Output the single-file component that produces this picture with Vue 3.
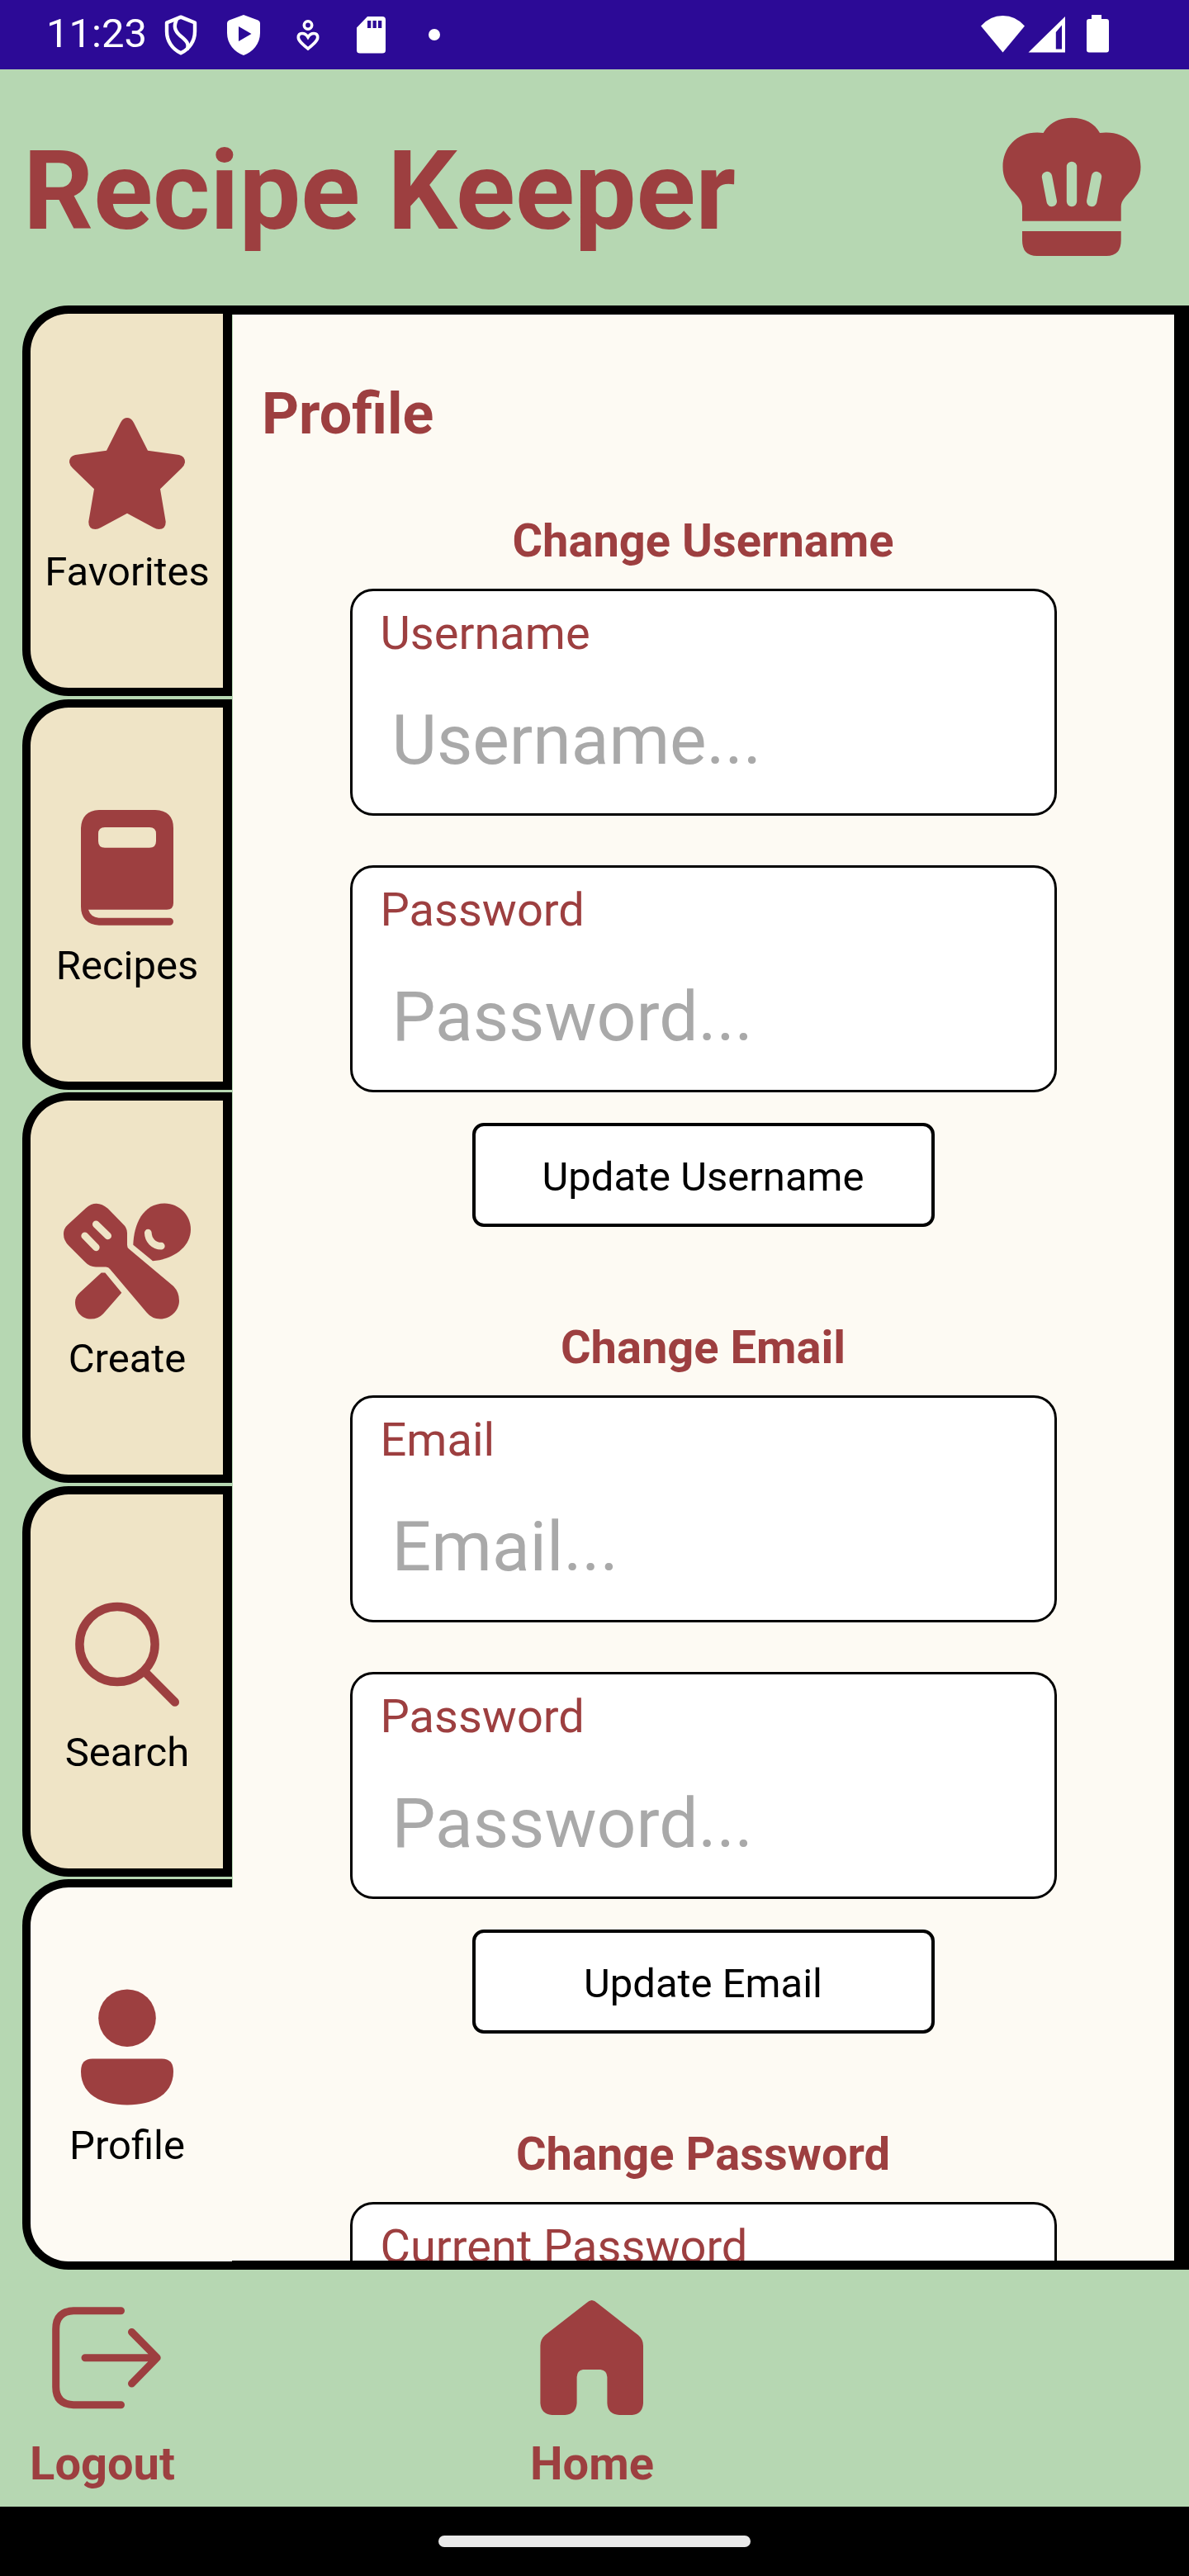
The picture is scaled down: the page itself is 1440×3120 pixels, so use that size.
<script setup>
const tabs = [
  { id: 'favorites', label: 'Favorites' },
  { id: 'recipes', label: 'Recipes' },
  { id: 'create', label: 'Create' },
  { id: 'search', label: 'Search' },
  { id: 'profile', label: 'Profile', active: true },
]

const sections = [
  { title: 'Change Username', fields: [{ label: 'Username', hint: 'Username...' }, { label: 'Password', hint: 'Password...' }], action: 'Update Username' },
  { title: 'Change Email', fields: [{ label: 'Email', hint: 'Email...' }, { label: 'Password', hint: 'Password...' }], action: 'Update Email' },
  { title: 'Change Password', fields: [{ label: 'Current Password' }] },
]
</script>

<template>
  <div class="screen">
    <div class="status">
      <span class="clock">11:23</span>
      <svg class="s-shield" viewBox="0 0 40 49" width="40" height="49" fill="none" stroke="#fff" stroke-width="4.4" stroke-linejoin="round">
        <path d="M20 2.6 37 9.5V20c0 11.500-6.500 21.500-17 26.300C9.500 41.500 3 31.500 3 20V9.500z" />
        <path d="M15.500 4.500C10.500 14 13 19.500 19 25c6.500 5.500 12 9.500 8.500 17" />
      </svg>
      <svg class="s-play" viewBox="0 0 40 49" width="40" height="49">
        <path fill="#fff" fill-rule="evenodd" d="M20 0 37.500 6.500Q40 7.500 40 10V22C40 35 31 45 20 49 9 45 0 35 0 22V10Q0 7.500 2.500 6.500zM14 14V32L29.500 23z" />
      </svg>
      <svg class="s-heart" viewBox="0 0 28 40" width="28" height="40" fill="none" stroke="#fff" stroke-width="3.600">
        <circle cx="14" cy="7.500" r="4.700" />
        <path d="M14 36C8 31 2.300 26.500 2.300 22.500c0-6.500 8-6.500 11.700-.5 3.700-6 11.700-6 11.700.5C25.700 26.500 20 31 14 36z" />
      </svg>
      <svg class="s-sd" viewBox="0 0 35 45" width="35" height="45">
        <path fill="#fff" fill-rule="evenodd" d="M13 0H31Q35 0 35 4V41Q35 44.500 31 44.500H4Q0 44.500 0 41V13.500zM13 5V14H17.300V5zM19.500 5V14H23.800V5zM26 5V14H30.300V5z" />
      </svg>
      <span class="dot"></span>
      <svg class="s-right" viewBox="0 0 156 48" width="156" height="48" fill="#fff">
        <path d="M0 13.500Q11 1 26.500 1T53 13.500L26.500 45.500z" />
        <path fill-rule="evenodd" d="M102 2V45.500H57.500zM98 12.500 90.800 21V41.500H98z" />
        <path d="M134 0h12v5h6q3 0 3 3V42.500q0 3-3 3H131q-3 0-3-3V8q0-3 3-3h3z" />
      </svg>
    </div>

    <header class="header">
      <h1>Recipe Keeper</h1>
      <svg class="hat" viewBox="0 0 200 200" width="200" height="200">
        <path class="ink" d="M40 141.700V124C39.500 117 35 112.500 30.500 107.300 21 98 16.500 88 16.500 76 16.500 51 36 31 65.600 35 72 23.500 84 16.700 99.800 16.700S128 23.500 134 35C164 31 183.500 51 183.500 76 183.500 88 179 98 169.500 107.300 165 112.500 160 117 159.700 124V141.700z" />
        <path class="ink" d="M40 154H159.700V165Q159.700 184 142 184H58Q40 184 40 165z" />
        <g class="cut">
          <path d="M100 76V118" />
          <path d="M70 88 75.800 118" />
          <path d="M130 88 124.200 118" />
        </g>
      </svg>
    </header>

    <main class="main">
      <nav class="tabs">
        <div v-for="tab in tabs" :key="tab.id" class="tab" :class="{ active: tab.active }">
          <svg class="icon" viewBox="0 0 168 168" width="168" height="168">
            <path v-if="tab.id === 'favorites'" class="ink" d="M76 22Q79 16 84 16T92 22L109 55.700 147 61Q154 62.500 154 70 153.500 73.500 150 77L124 102.300 130.700 141.700Q131 151 122.500 151 119.500 151 116 149L84 131.700 52 149Q48.500 151 45.500 151 37 151 37.300 141.700L44 102.300 18 77Q14.500 73.500 14 70 14 62.500 21 61L59 55.700z" />
            <path v-else-if="tab.id === 'recipes'" class="ink" fill-rule="evenodd" d="M50 14H118Q140 15 140 36V126.700Q140 134.700 132 134.700H37Q40 144 49.500 144.700H135.500A4.500 4.500 0 0 1 135.500 153.700H50Q28 152 28 131V36Q29 15 50 14zM57 35Q49 35 49 43V51.700Q49 59.700 57 59.700H111Q119 59.700 119 51.700V43Q119 35 111 35z" />
            <template v-else-if="tab.id === 'create'">
              <path class="ink" d="M34 20.200Q47 9 60.700 20.800L78.700 39.200Q84 44 84 50.200V64.800Q84 68 86 69.500L140 114.800Q147 122 147 132.500C147 144 137 154.500 124 154.500Q114 154.500 107.700 146.800L63.300 94.200Q61.500 91.500 58.300 91.500H46Q38.500 91.500 33.300 85.800L13.300 65.800Q7 59.500 7 51.800 7 45 11.700 40.800z" />
              <path class="ink" d="M91.300 64.800C92 40 103 14.500 129.300 14.500 147 14.500 161 29 161 45.800 161 69 137 83 115 84.200z" />
              <path class="ink" d="M52.700 98.500H57.300L77.300 122.800 55 148.200Q49 154.500 40 154.500C29.500 154.500 21 146 21 134.200Q21 127.500 26.700 122.500z" />
              <g class="slot">
                <path d="M46.300 39.800 60.700 53.800" />
                <path d="M32.700 53.800 46.300 67.800" />
                <path d="M109.300 50.200C109.500 59 116 66 125.300 66.200" />
              </g>
            </template>
            <g v-else-if="tab.id === 'search'" class="line">
              <circle cx="72" cy="71.500" r="45.600" />
              <path d="M106 105.500 141.800 141.500" />
            </g>
            <template v-else>
              <circle class="ink" cx="84" cy="48.200" r="34.800" />
              <path class="ink" d="M42 97.600H126Q140 97.600 140 113C140 139 118 153.400 84 153.400S28 139 28 113Q28 97.600 42 97.600z" />
            </template>
          </svg>
          <span class="tab-label">{{ tab.label }}</span>
        </div>
      </nav>

      <section class="panel">
        <h2>Profile</h2>
        <div v-for="s in sections" :key="s.title" class="group">
          <h3>{{ s.title }}</h3>
          <div v-for="f in s.fields" :key="f.label" class="field">
            <div class="field-label">{{ f.label }}</div>
            <div v-if="f.hint" class="placeholder">{{ f.hint }}</div>
          </div>
          <div v-if="s.action" class="button">{{ s.action }}</div>
        </div>
      </section>
    </main>

    <footer class="footer">
      <div class="foot-item logout">
        <svg viewBox="0 0 150 150" width="150" height="150" class="line exit">
          <path d="M91.500 18.700H34Q12.700 19.500 12.700 41V111Q12.700 132 34 132.700H91.500" />
          <path d="M48 75.700H135M104.500 44.500 135.200 75.700 104.500 107" />
        </svg>
        <span>Logout</span>
      </div>
      <div class="foot-item home">
        <svg viewBox="0 0 154 150" width="154" height="150">
          <path class="ink" d="M70 9.500Q76.700 2.500 83.500 9.500L133 48.300Q139 53.500 139 61V130.700Q138 144 125.500 145H110Q96 144 95.400 130.700V99Q95 91 87.300 90H66Q59 91 58.600 99V130.700Q57.500 144 44.300 145H28.500Q15.500 144 14.400 130.700V61Q14.400 53.500 20.200 48.300z" />
        </svg>
        <span>Home</span>
      </div>
    </footer>

    <div class="navbar"><span class="pill"></span></div>
  </div>
</template>

<style>
body {
  margin: 0;
}
</style>

<style scoped>
.screen {
  width: 1440px;
  height: 3120px;
  display: flex;
  flex-direction: column;
  overflow: hidden;
  background: #b6d7b2;
  color: #000;
  font-family: Roboto, 'Liberation Sans', sans-serif;
}
.screen * {
  box-sizing: border-box;
}
h1, h2, h3 {
  margin: 0;
  font-weight: 700;
  color: #9d3f40;
}
svg {
  display: block;
  flex: none;
}
.ink {
  fill: #9d3f40;
}
.status {
  height: 84px;
  flex: none;
  display: flex;
  align-items: flex-start;
  background: #2c0a96;
}
.clock {
  width: 142px;
  margin-left: 56px;
  padding-top: 12px;
  font-size: 49px;
  line-height: 58px;
  color: #fff;
}
.s-shield {
  margin: 18px 0 0 1px;
}
.s-play {
  margin: 18px 0 0 36px;
}
.s-heart {
  margin: 23px 0 0 44px;
}
.s-sd {
  margin: 20px 0 0 45px;
}
.dot {
  width: 14px;
  height: 14px;
  margin: 35px 0 0 52px;
  border-radius: 50%;
  background: #fff;
}
.s-right {
  margin: 18px 96px 0 auto;
}
.header {
  height: 286px;
  flex: none;
  display: flex;
  justify-content: space-between;
  padding: 42px 42px 0 28px;
}
h1 {
  margin-top: 28px;
  font-size: 133px;
  line-height: 156px;
  white-space: nowrap;
}
.cut {
  fill: none;
  stroke: #b6d7b2;
  stroke-width: 12.400px;
  stroke-linecap: round;
}
.main {
  height: 2379px;
  flex: none;
  display: flex;
  padding-left: 27px;
}
.tabs {
  width: 254px;
  flex: none;
  display: flex;
  flex-direction: column;
  justify-content: space-between;
}
.tab {
  height: 473px;
  display: flex;
  flex-direction: column;
  align-items: center;
  padding: 110px 0 0 1px;
  border: 10px solid #000;
  border-right-width: 11px;
  border-radius: 56px 0 0 56px;
  background: #efe4c6;
}
.tab.active {
  border-right: 0;
  padding-right: 11px;
  background: #fdfaf3;
}
.tab-label {
  margin-top: 6px;
  font-size: 49px;
  line-height: 58px;
}
.slot {
  fill: none;
  stroke: #efe4c6;
  stroke-width: 8.700px;
  stroke-linecap: round;
}
.line {
  fill: none;
  stroke: #9d3f40;
  stroke-width: 10.500px;
  stroke-linecap: round;
  stroke-linejoin: round;
}
.panel {
  flex: 1;
  overflow: hidden;
  display: flex;
  flex-direction: column;
  padding-top: 79px;
  border: solid #000;
  border-width: 11px 18px 11px 0;
  background: linear-gradient(#b6d7b2, #b6d7b2) 0 0 / 1px 1905px no-repeat #fdfaf3;
}
h2 {
  margin: 0 0 80px 36px;
  font-size: 70px;
  line-height: 82px;
}
.group {
  flex: none;
  width: 856px;
  margin: 0 auto 113px;
  display: flex;
  flex-direction: column;
  align-items: center;
}
h3 {
  margin-bottom: 25px;
  font-size: 56px;
  line-height: 66px;
}
.field {
  width: 856px;
  height: 275px;
  padding: 18px 33px 0 34px;
  border: 3px solid #000;
  border-radius: 28px;
  background: #fff;
}
.field + .field {
  margin-top: 60px;
}
.field-label {
  font-size: 56px;
  line-height: 66px;
  color: #9d3f40;
}
.placeholder {
  margin-top: 48px;
  padding-left: 14px;
  font-size: 84px;
  line-height: 98px;
  color: #a9a9a9;
}
.button {
  width: 560px;
  height: 126px;
  margin-top: 37px;
  padding-top: 33px;
  border: 4px solid #000;
  border-radius: 14px;
  background: #fff;
  font-size: 49px;
  line-height: 58px;
  text-align: center;
}
.footer {
  height: 287px;
  flex: none;
  display: flex;
  padding-top: 31px;
}
.foot-item {
  display: flex;
  flex-direction: column;
  align-items: center;
  font-size: 56px;
  line-height: 66px;
  font-weight: 700;
  color: #9d3f40;
}
.foot-item span {
  margin-top: 21px;
}
.logout {
  width: 178px;
  margin-left: 35px;
}
.exit {
  stroke-width: 9px;
  margin-left: 12px;
}
.home {
  width: 154px;
  margin-left: 427px;
}
.navbar {
  height: 84px;
  flex: none;
  display: flex;
  justify-content: center;
  align-items: center;
  background: #000;
}
.pill {
  width: 378px;
  height: 14px;
  border-radius: 7px;
  background: #e9e9e9;
}
</style>
